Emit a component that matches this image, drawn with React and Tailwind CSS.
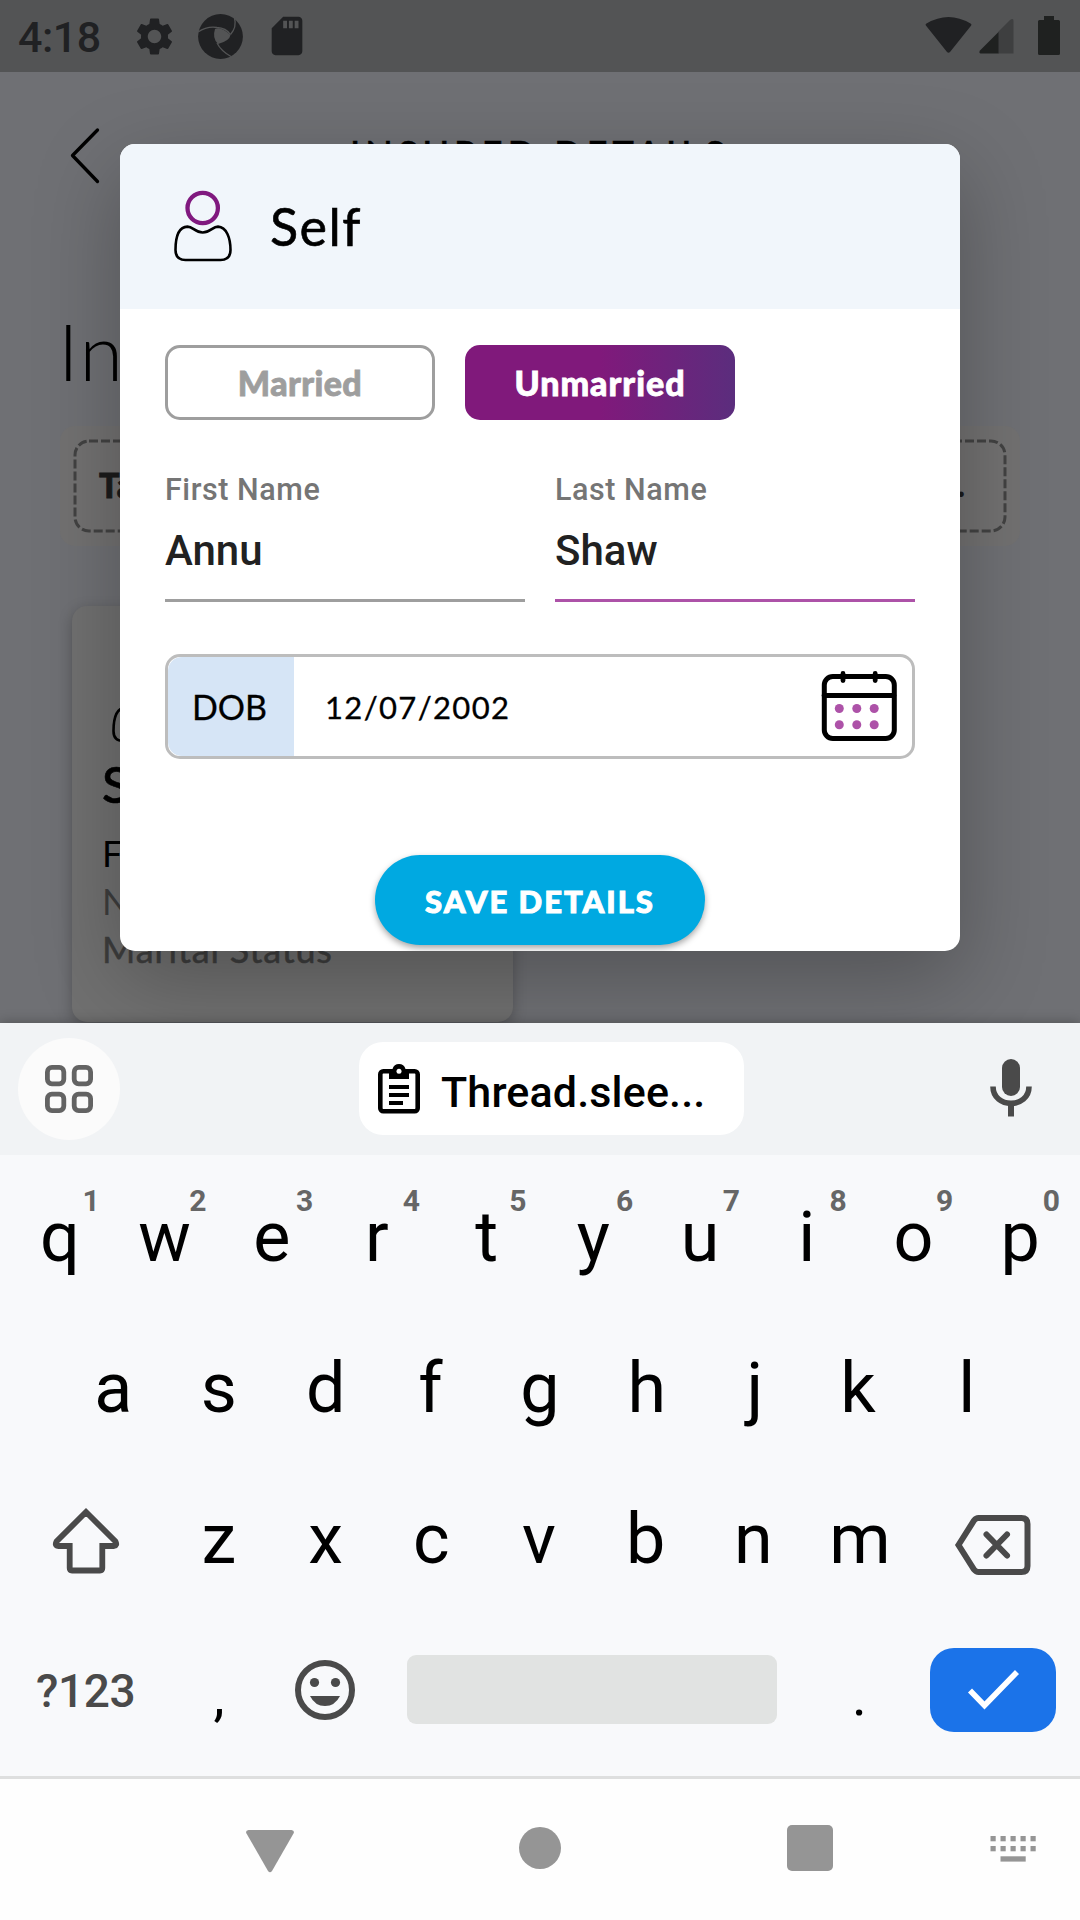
import React from "react";
import { MdSettings, MdSdCard } from "react-icons/md";

const LATO = "font-['Lato',sans-serif]";

function StatusBar() {
  return (
    <div className="flex h-[72px] items-center bg-[#535455] pl-[18px] pr-[20px] text-[#202123]">
      <span className="mt-[3px] w-[114px] text-[43px] font-medium leading-none tracking-[-0.500px]">4:18</span>
      <MdSettings className="size-[45px]" />
      <svg className="ml-[20px] size-[47px]" viewBox="0 0 47 47">
        <circle cx="23.5" cy="23.500" r="22.400" fill="#202123" />
        <path d="M18 16Q24 13 33.500 22Q32.500 28 21 31Q15 25 18 16Z" fill="#535455" />
        <g fill="none" stroke="#535455" strokeWidth="1.300">
          <path d="M1 19Q10 13 20 14.500Q29 15 33.500 21.500" />
          <path d="M37.500 5Q40 14 33.500 21.500" />
          <path d="M20 30Q24 38 34 43.500" />
        </g>
      </svg>
      <MdSdCard className="ml-[20px] size-[46px]" />
      <div className="ml-auto flex items-start">
        <svg className="h-[40px] w-[47px]" viewBox="0 0 47 40" fill="#202123">
          <path d="M1.300 10Q-.2 8.600 1.500 7.500Q23.500-5.500 45.500 7.500Q47.200 8.600 45.800 10L25 36Q23.500 37.500 22 36Z" />
        </svg>
        <svg className="ml-[7px] h-[40px] w-[36px]" viewBox="0 0 36 40">
          <path d="M31 4Q34.500 1.500 34.500 5V37.500H19V16Z" fill="#3e3f40" />
          <path d="M19.500 16V37.500H1.500Q-.5 37 1 34.500Z" fill="#1f2120" />
        </svg>
        <svg className="ml-[23px] h-[40px] w-[22px]" viewBox="0 0 22 40" fill="#1f2120">
          <path d="M6 0H16V4H20.500Q22 4 22 5.500V37.500Q22 39 20.500 39H1.500Q0 39 0 37.500V5.500Q0 4 1.500 4H6Z" />
        </svg>
      </div>
    </div>
  );
}

function PersonIcon({ className, head }) {
  return (
    <svg className={className} viewBox="0 0 66 78" fill="none">
      <circle cx="32.700" cy="20" r="15.200" stroke={head} strokeWidth="4.300" />
      <path
        d="M32.700 44.500C25 44.500 23 38.600 17.500 38.600C8.500 39 5.500 50 5.500 62C5.500 68.500 9 72 15.500 72H50.500C57 72 60.500 68.500 60.500 62C60.500 50 56.500 39 48 38.600C42.500 38.600 40.500 44.500 32.700 44.500Z"
        stroke="#000"
        strokeWidth="2.600"
      />
    </svg>
  );
}

function PageBehind() {
  return (
    <div className={`h-full overflow-hidden bg-[#6f7074] ${LATO}`}>
      <div className="flex h-[168px] items-start pl-[68px] pt-[54px]">
        <svg className="h-[60px] w-[34px]" viewBox="0 0 34 60" fill="none">
          <path d="M29.500 4L4.500 29.500L29.500 55.500" stroke="#000" strokeWidth="3.300" strokeLinecap="round" strokeLinejoin="round" />
        </svg>
        <div className="ml-[248px] mt-[3px] whitespace-nowrap text-[36px] font-medium leading-[48px] tracking-[5.050px] text-black [-webkit-text-stroke:0.5px]">INSURED DETAILS</div>
      </div>
      <div className="ml-[58px] h-[186px] whitespace-nowrap pt-[71px] text-[79px] font-light leading-none tracking-[1.500px] text-black">In</div>
      <div className="mx-[60px] h-[120px] rounded-[15px] bg-[#727171] p-[13px]">
        <div className="relative flex h-full items-center justify-between pl-[26px] pr-[42px]">
          <svg className="absolute inset-0 size-full" viewBox="0 0 934 94" fill="none">
            <rect x="2" y="2" width="930" height="90" rx="14" stroke="#424242" strokeWidth="3" strokeDasharray="9 3" />
          </svg>
          <span className="mb-[3px] text-[34px] font-black tracking-[1px] text-[#1b1b1b] [-webkit-text-stroke:0.8px]">Tap</span>
          <span className="mb-[6px] text-[34px] font-black text-[#1b1b1b]">.</span>
        </div>
      </div>
      <div className="ml-[72px] mt-[60px] h-[416px] w-[441px] rounded-[15px] bg-[#707070] pl-[30px] shadow-[0_4px_14px_rgba(0,0,0,0.25)]">
        <PersonIcon className="h-[78px] w-[66px] translate-x-[6px] translate-y-[63px]" head="#3a0d39" />
        <div className="mt-[70px] text-[50px] font-medium leading-[60px] text-black [-webkit-text-stroke:0.6px]">Self</div>
        <div className="mt-[15px] text-[36px] leading-[48px] tracking-[0.850px] text-black">Full Name</div>
        <div className="text-[36px] leading-[48px] tracking-[0.850px] text-[#3d3d3d]">Nominee</div>
        <div className="text-[36px] leading-[48px] tracking-[0.850px] text-[#3d3d3d] [-webkit-text-stroke:0.5px]">Marital Status</div>
      </div>
    </div>
  );
}

function Field({ label, value, line }) {
  return (
    <div className="w-[360px]">
      <div className="text-[30.500px] font-medium leading-[36px] tracking-[0.550px] text-[#757575]">{label}</div>
      <div className="mt-[18px] text-[42px] font-medium leading-[50px] text-[#212121]">{value}</div>
      <div className={`mt-[23px] h-[3px] ${line}`} />
    </div>
  );
}

function CalendarIcon() {
  return (
    <svg className="h-[72px] w-[76px]" viewBox="0 0 76 72" fill="none">
      <rect x="3.300" y="6.500" width="70" height="62" rx="8.500" stroke="#000" strokeWidth="5" />
      <path d="M3 25.500H73M22 3.500V10.500M54.200 3.500V10.500" stroke="#000" strokeWidth="4.800" strokeLinecap="round" />
      <g fill="#ad52a8">
        {[18.300, 35.800, 53.200].map((x) => (
          <React.Fragment key={x}>
            <circle cx={x} cy="38.500" r="4.500" />
            <circle cx={x} cy="54.700" r="4.500" />
          </React.Fragment>
        ))}
      </g>
    </svg>
  );
}

function MemberDialog() {
  return (
    <div className="absolute left-[120px] top-[144px] h-[807px] w-[840px] overflow-hidden rounded-[15px] bg-white shadow-[0_28px_85px_rgba(0,0,0,0.26)]">
      <div className="flex h-[165px] items-center bg-[#f1f6fb] pl-[50px]">
        <PersonIcon className="h-[78px] w-[66px]" head="#80197f" />
        <span className={`mb-[1px] ml-[34px] text-[52px] leading-none tracking-[1.500px] text-black [-webkit-text-stroke:0.6px] ${LATO}`}>Self</span>
      </div>
      <div className="px-[45px] pt-[36px]">
        <div className={`flex gap-[30px] text-[34px] font-black ${LATO}`}>
          <button className="h-[75px] w-[270px] rounded-[15px] border-[3px] border-[#9e9e9e] tracking-[0.400px] text-[#9e9e9e] [-webkit-text-stroke:0.8px]">Married</button>
          <button className="h-[75px] w-[270px] rounded-[15px] bg-[linear-gradient(90deg,#80197b_50%,#5b2d7d_100%)] tracking-[1px] text-white [-webkit-text-stroke:0.8px]">Unmarried</button>
        </div>
        <div className="mt-[52px] flex gap-[30px]">
          <Field label="First Name" value="Annu" line="bg-[#9e9e9e]" />
          <Field label="Last Name" value="Shaw" line="bg-[#ad52a8]" />
        </div>
        <div className={`mt-[52px] flex h-[105px] items-center overflow-hidden rounded-[15px] border-[3px] border-[#bdbdbd] pr-[15px] text-black ${LATO}`}>
          <div className="flex h-full w-[126px] items-center justify-center rounded-l-[14px] bg-[#d6e5f6] pr-[3px] text-[34px] [-webkit-text-stroke:0.3px]">DOB</div>
          <div className="ml-[31px] pt-[2px] text-[31px] tracking-[1.350px] [-webkit-text-stroke:0.3px]">12/07/2002</div>
          <div className="mb-[2px] ml-auto">
            <CalendarIcon />
          </div>
        </div>
        <button className={`mx-auto mt-[96px] block h-[90px] w-[330px] rounded-full bg-[#00a9e1] pt-[2px] text-[31px] font-black tracking-[2.000px] text-white shadow-[0_3px_6px_rgba(0,0,0,0.35)] [-webkit-text-stroke:1px] ${LATO}`}>
          SAVE DETAILS
        </button>
      </div>
    </div>
  );
}

function SuggestionBar() {
  return (
    <div className="flex h-[131.500px] items-center bg-[#f1f3f5] pl-[18px] pr-[48px]">
      <div className="flex size-[102px] items-center justify-center rounded-full bg-[#fbfbfb]">
        <svg className="size-[50px]" viewBox="0 0 50 50" fill="none" stroke="#636363" strokeWidth="4.800">
          <rect x="3.400" y="3.400" width="16.400" height="16.400" rx="4.500" />
          <rect x="30.200" y="3.400" width="16.400" height="16.400" rx="4.500" />
          <rect x="3.400" y="30.200" width="16.400" height="16.400" rx="4.500" />
          <rect x="30.200" y="30.200" width="16.400" height="16.400" rx="4.500" />
        </svg>
      </div>
      <div className="ml-[239px] flex h-[93px] w-[385px] items-center rounded-[24px] bg-white pl-[19px]">
        <svg className="h-[50px] w-[42px]" viewBox="0 0 42 50">
          <rect x="2.300" y="7.300" width="37.400" height="40" rx="3" fill="none" stroke="#000" strokeWidth="4.600" />
          <path d="M11 5H14.500Q16 0 21 0T27.500 5H31V15H11Z" />
          <circle cx="21" cy="7.300" r="2.500" fill="#fff" />
          <path d="M11 23H31M11 31H31M11 39H25" stroke="#000" strokeWidth="4.200" />
        </svg>
        <span className="ml-[21px] mt-[8px] text-[43px] font-medium leading-none tracking-[0.150px] text-black">Thread.slee...</span>
      </div>
      <svg className="mb-[2px] ml-auto h-[58px] w-[42px]" viewBox="0 0 42 58" fill="none">
        <rect x="12" y="0" width="18" height="37" rx="9" fill="#4a4a4a" />
        <path d="M3 27.500C3 50 39 50 39 27.500" stroke="#4a4a4a" strokeWidth="5.600" />
        <path d="M21 44V57.500" stroke="#4a4a4a" strokeWidth="6" />
      </svg>
    </div>
  );
}

// Optical centring: letters whose ink sits right of their advance box.
const OPTICAL = {
  r: "pr-[6px]",
  f: "pr-[6px]",
  w: "pr-[4px]",
  c: "pr-[4px]",
  k: "pr-[4px]",
  e: "pr-[3px]",
  s: "pr-[2px]",
  d: "pr-[2px]",
  x: "pr-[2px]",
  z: "pr-[2px]",
  v: "pr-[2px]",
  b: "pr-[2px]",
  j: "pl-[3px]",
};

function Key({ letter, hint }) {
  return (
    <div className={`relative flex w-[106.700px] items-center justify-center text-[70px] leading-none text-black ${OPTICAL[letter] ?? ""}`}>
      {letter}
      {hint && <span className="absolute left-[76px] top-[25px] text-[30px] font-bold leading-none text-[#666]">{hint}</span>}
    </div>
  );
}

function Keyboard() {
  return (
    <div className="h-[621.500px] bg-[#f8f9fb] pt-[6.500px]">
      <div className="flex h-[151px] justify-center">
        {"qwertyuiop".split("").map((c, i) => (
          <Key key={c} letter={c} hint={String((i + 1) % 10)} />
        ))}
      </div>
      <div className="flex h-[151px] justify-center">
        {"asdfghjkl".split("").map((c) => (
          <Key key={c} letter={c} />
        ))}
      </div>
      <div className="flex h-[151px] justify-center">
        <div className="flex w-[160px] items-center justify-center pr-[2px]">
          <svg className="mt-[5px] h-[68px] w-[70px]" viewBox="0 0 70 68" fill="none">
            <path d="M35 5L5.500 34.500Q3.500 38.500 7 39H18.700V61Q18.700 63.500 21 63.500H49Q51.300 63.500 51.300 61V39H63Q66.500 38.500 64.500 34.500Z" stroke="#4a4a4a" strokeWidth="5.800" />
          </svg>
        </div>
        {"zxcvbnm".split("").map((c) => (
          <Key key={c} letter={c} />
        ))}
        <div className="flex w-[160px] items-center justify-center">
          <svg className="mt-[13px] h-[62px] w-[78px]" viewBox="0 0 78 62" fill="none" stroke="#4a4a4a" strokeWidth="6">
            <path d="M4.500 31L20 6.500Q22 4 24.500 4H67.500Q73.500 4 73.500 10V52Q73.500 58 67.500 58H24.500Q22 58 20 55.500Z" />
            <path d="M32.500 20.500L53 41.500M53 20.500L32.500 41.500" strokeLinecap="round" />
          </svg>
        </div>
      </div>
      <div className="flex h-[151px] items-center">
        <div className="w-[166px] pl-[36px] pt-[2px] text-[46px] font-medium leading-none tracking-[-0.400px] text-[#4a4a4a]">?123</div>
        <div className="w-[106px] pt-[12px] text-center text-[56px] leading-none text-black">,</div>
        <div className="flex w-[106px] justify-center">
          <svg className="size-[60px]" viewBox="0 0 60 60" fill="#4a4a4a">
            <circle cx="30" cy="30" r="27" fill="none" stroke="#4a4a4a" strokeWidth="6" />
            <circle cx="19.500" cy="22.500" r="4.600" />
            <circle cx="40.500" cy="22.500" r="4.600" />
            <path d="M15 36H45Q40 46 30 46T15 36Z" />
          </svg>
        </div>
        <div className="ml-[29px] h-[69px] w-[370px] rounded-[9px] bg-[#e1e3e2]" />
        <div className="w-[153px] pl-[12px] pt-[12px] text-center text-[56px] leading-none text-black">.</div>
        <div className="flex h-[84px] w-[126px] items-center justify-center rounded-[24px] bg-[#1b73e9] pl-[2px] pt-[1px]">
          <svg className="h-[42px] w-[54px]" viewBox="0 0 54 42" fill="none">
            <path d="M3 21.500L17.500 36.500L50 3" stroke="#fff" strokeWidth="5.600" />
          </svg>
        </div>
      </div>
    </div>
  );
}

function NavBar() {
  return (
    <div className="relative flex h-[144px] items-center border-t-[3px] border-[#dedfdf] bg-[#fefefe] pl-[246px] pr-[43px]">
      <svg className="mt-[3px] h-[44px] w-[48px]" viewBox="0 0 48 44" fill="#959595">
        <path d="M2.500 1H45.500Q49 1.500 47.500 4.500L26 42Q24 44.500 22 42L.5 4.500Q-1 1.500 2.500 1Z" />
      </svg>
      <div className="ml-[225px] mt-[-3px] size-[42px] rounded-full bg-[#959595]" />
      <div className="ml-[226px] mt-[-3px] size-[46px] rounded-[5px] bg-[#959595]" />
      <svg className="ml-auto mt-[-2px] h-[26px] w-[47px]" viewBox="0 0 47 26" fill="#959595">
        {[0.500, 10.500, 20.500, 30.500, 40.500].map((x) => (
          <React.Fragment key={x}>
            <rect x={x} y="0" width="5.200" height="5.300" />
            <rect x={x} y="10" width="5.200" height="5.300" />
          </React.Fragment>
        ))}
        <rect x="10.500" y="20.300" width="25.200" height="5.300" />
      </svg>
    </div>
  );
}

export default function App() {
  return (
    <div className="relative flex h-[1920px] w-[1080px] flex-col overflow-hidden bg-white font-['Roboto',sans-serif]">
      <StatusBar />
      <div className="h-[951px]">
        <PageBehind />
      </div>
      <MemberDialog />
      <div className="relative shadow-[0_0_12px_rgba(0,0,0,0.3)]">
        <SuggestionBar />
        <Keyboard />
      </div>
      <NavBar />
    </div>
  );
}
